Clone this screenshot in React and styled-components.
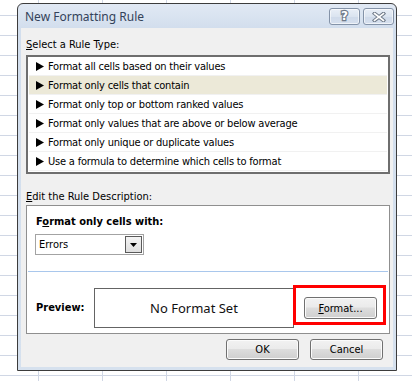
import styled, { createGlobalStyle } from "styled-components";

const GlobalStyle = createGlobalStyle`
  html, body {
    margin: 0;
    padding: 0;
  }
  body {
    font-family: "DejaVu Sans Condensed", "Liberation Sans", sans-serif;
    font-size: 11px;
    color: #000;
  }
`;

const rules = [
  "Format all cells based on their values",
  "Format only cells that contain",
  "Format only top or bottom ranked values",
  "Format only values that are above or below average",
  "Format only unique or duplicate values",
  "Use a formula to determine which cells to format",
];

const Arrow = () => (
  <svg width="8" height="9" viewBox="0 0 8 9">
    <polygon points="0,0 8,4.5 0,9" fill="#000" />
  </svg>
);

const CloseGlyph = () => (
  <svg width="14" height="10" viewBox="0 0 14 10">
    <path d="M2.5 1.5 L11.5 8.5 M11.5 1.5 L2.5 8.5" stroke="#6f7a89" strokeWidth="3.6" strokeLinecap="square" />
    <path d="M2.5 1.5 L11.5 8.5 M11.5 1.5 L2.5 8.5" stroke="#fff" strokeWidth="1.6" strokeLinecap="square" />
  </svg>
);

const App = () => {
  return (
    <Page>
      <GlobalStyle />
      <Dialog>
        <TitleBar>
          <Title>New Formatting Rule</Title>
          <TitleButtons>
            <CaptionButton>
              <HelpGlyph>?</HelpGlyph>
            </CaptionButton>
            <CaptionButton>
              <CloseGlyph />
            </CaptionButton>
          </TitleButtons>
        </TitleBar>
        <Body>
          <Label>
            <u>S</u>elect a Rule Type:
          </Label>
          <RuleList>
            {rules.map((r, i) => (
              <RuleRow key={r} selected={i === 1}>
                <Arrow />
                <span>{r}</span>
              </RuleRow>
            ))}
          </RuleList>
          <SectionLabel>
            <u>E</u>dit the Rule Description:
          </SectionLabel>
          <DescBox>
            <Criteria>
              <BoldLabel>
                F<u>o</u>rmat only cells with:
              </BoldLabel>
              <Select>
                <span>Errors</span>
                <SelectButton>
                  <svg width="7" height="4" viewBox="0 0 7 4">
                    <polygon points="0,0 7,0 3.5,4" fill="#000" />
                  </svg>
                </SelectButton>
              </Select>
            </Criteria>
            <Divider />
            <PreviewRow>
              <PreviewLabel>Preview:</PreviewLabel>
              <PreviewBox>No Format Set</PreviewBox>
              <Highlight>
                <FormatButton>
                  <u>F</u>ormat...
                </FormatButton>
              </Highlight>
            </PreviewRow>
          </DescBox>
          <Footer>
            <Button>OK</Button>
            <Button>Cancel</Button>
          </Footer>
        </Body>
      </Dialog>
    </Page>
  );
};

const Page = styled.div`
  width: 412px;
  height: 381px;
  box-sizing: border-box;
  overflow: hidden;
  padding: 3px 0 0 17px;
  background-color: #fff;
  background-image: linear-gradient(to right, #d0d7e5 1px, transparent 1px),
    linear-gradient(to bottom, #d0d7e5 1px, transparent 1px);
  background-size: 64px 100%, 100% 20px;
  background-position: 38px 0, 0 15px;
`;

const Dialog = styled.div`
  width: 380px;
  height: 368px;
  box-sizing: border-box;
  border: 1px solid #3c3c3c;
  border-radius: 6px 6px 0 0;
  background: linear-gradient(#e1e9f4, #d2deed 24px, #d6e1ee);
  padding: 0 3px 3px 3px;
  display: flex;
  flex-direction: column;
`;

const TitleBar = styled.div`
  height: 24px;
  display: flex;
  align-items: center;
  justify-content: space-between;
  padding-left: 4px;
  margin-right: -1px;
`;

const Title = styled.div`
  font-family: "Noto Sans", "Open Sans", sans-serif;
  font-size: 12px;
  color: #34435a;
`;

const TitleButtons = styled.div`
  display: flex;
  gap: 3px;
  padding-top: 1px;
`;

const CaptionButton = styled.div`
  width: 31px;
  height: 17px;
  box-sizing: border-box;
  border: 1px solid #8493a8;
  border-radius: 3px;
  background: linear-gradient(#e9eff7, #dbe4f0 50%, #cfdaea 51%, #d6e0ee);
  box-shadow: inset 0 0 0 1px rgba(255, 255, 255, 0.6);
  display: flex;
  align-items: center;
  justify-content: center;
`;

const HelpGlyph = styled.span`
  font-family: "DejaVu Sans", sans-serif;
  font-weight: bold;
  font-size: 12px;
  line-height: 13px;
  color: #fff;
  -webkit-text-stroke: 2.4px #6f7a89;
  paint-order: stroke fill;
`;

const Body = styled.div`
  flex: 1;
  background: #f0f0f0;
  padding: 10px 3px 0 5px;
  display: flex;
  flex-direction: column;
`;

const Label = styled.div`
  line-height: 14px;
  margin-bottom: 3px;
`;

const SectionLabel = styled(Label)`
  margin-top: 16px;
  margin-bottom: 1px;
`;

const RuleList = styled.div`
  border: 2px solid #6e6e6e;
  background: #fff;
  padding: 0 1px 1px;
`;

const RuleRow = styled.div`
  height: 19px;
  box-sizing: border-box;
  display: flex;
  align-items: center;
  gap: 4px;
  padding-left: 7px;
  letter-spacing: -0.2px;
  border-bottom: 1px solid #f1f1f1;
  background: ${(p) => (p.selected ? "#ece9d8" : "transparent")};
`;

const DescBox = styled.div`
  height: 129px;
  box-sizing: border-box;
  border: 1px solid #8f8f8f;
  background: #fff;
  display: flex;
  flex-direction: column;
`;

const Criteria = styled.div`
  height: 65px;
  box-sizing: border-box;
  padding: 9px 0 0 8px;
`;

const BoldLabel = styled.div`
  font-weight: bold;
  line-height: 14px;
  padding-left: 1px;
  margin-bottom: 5px;
`;

const Select = styled.div`
  width: 109px;
  height: 21px;
  box-sizing: border-box;
  border: 1px solid #a3a3a3;
  padding: 1px 1px 1px 3px;
  display: flex;
  align-items: center;
  justify-content: space-between;
`;

const SelectButton = styled.div`
  width: 17px;
  height: 17px;
  box-sizing: border-box;
  border: 1px solid #5a5a5a;
  background: linear-gradient(#f4f4f4, #dedede);
  display: flex;
  align-items: center;
  justify-content: center;
`;

const Divider = styled.div`
  height: 1px;
  margin: 0 1px;
  background: #a9c7ec;
`;

const PreviewRow = styled.div`
  flex: 1;
  display: flex;
  align-items: flex-start;
  padding: 16px 0 0 9px;
`;

const PreviewLabel = styled.div`
  width: 58px;
  font-weight: bold;
  line-height: 40px;
`;

const PreviewBox = styled.div`
  width: 200px;
  height: 40px;
  box-sizing: border-box;
  border: 1px solid #646464;
  display: flex;
  align-items: center;
  justify-content: center;
  font-family: "Noto Sans", "Open Sans", sans-serif;
  font-size: 13px;
  color: #111;
`;

const Highlight = styled.div`
  width: 93px;
  height: 40px;
  box-sizing: border-box;
  margin: -3px 0 0 -1px;
  border: 3px solid #ff0000;
  padding: 9px 0 0 8px;
`;

const Button = styled.button`
  width: 73px;
  height: 21px;
  box-sizing: border-box;
  padding: 0;
  border: 1px solid #707070;
  border-radius: 3px;
  background: linear-gradient(#f2f2f2 0%, #ebebeb 45%, #dddddd 50%, #cfcfcf 100%);
  box-shadow: inset 0 0 0 1px #fbfbfb;
  font-family: "DejaVu Sans Condensed", "Liberation Sans", sans-serif;
  font-size: 11px;
  color: #000;
`;

const FormatButton = styled(Button)`
  height: 22px;
`;

const Footer = styled.div`
  display: flex;
  justify-content: flex-end;
  gap: 11px;
  padding: 5px 7px 0 0;
`;

export default App;
